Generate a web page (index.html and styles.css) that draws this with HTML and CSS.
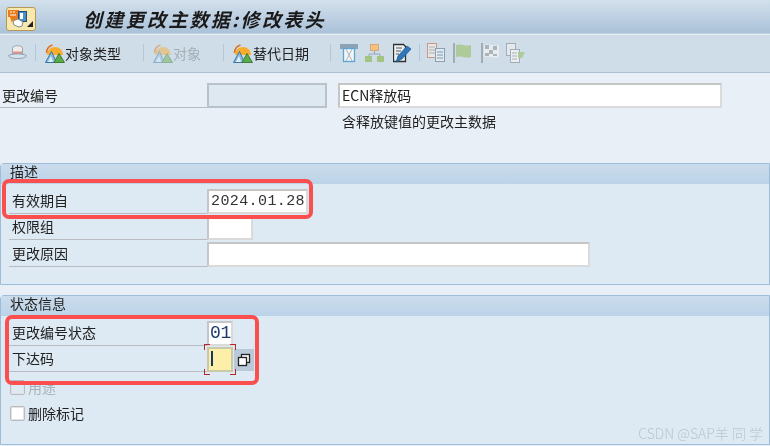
FILE: index.html
```html
<!DOCTYPE html>
<html lang="zh">
<head>
<meta charset="utf-8">
<title>创建更改主数据:修改表头</title>
<link rel="stylesheet" href="styles.css">
</head>
<body>
<header class="titlebar">
  <div class="menu-btn">
    <svg width="28" height="22" viewBox="0 0 28 22"><path d="M1 2h11v9H9l-1 3-2-2-1 3-2-6H1z" fill="#ea7a1c"/><path d="M3 4h2M6 4h2M3 7h6" stroke="#fff"/><rect x="11.500" y="3.500" width="8" height="10" fill="#4b8fc4" stroke="#1d4f7d"/><rect x="13" y="5" width="3" height="6" fill="#fff"/><path d="M6 13l5-2 5 3-1 4-3 1-5-2z" fill="#fff" stroke="#8a8a80"/><path d="M20 19h6v-6z" fill="#222"/></svg>
  </div>
  <h1 class="title">创建更改主数据:修改表头</h1>
</header>
<nav class="toolbar">
  <svg class="ico hat" width="19" height="18" viewBox="0 0 19 18"><path d="M4.500 4c0-3 10-3 10 0v7h-10z" fill="#f2ece8" stroke="#98a8b8"/><path d="M5 7.500h9v2.500H5z" fill="#e2928a"/><path d="M.5 11.500c3-2 15-2 18 0 0 4-18 4-18 0z" fill="#d6e4f0" stroke="#8aa3b8"/></svg>
  <span class="sep s1"></span>
  <span class="tb-btn b1"><svg class="mount" width="20" height="20" viewBox="0 0 20 20"><use href="#m"/></svg>对象类型</span>
  <span class="sep s2"></span>
  <span class="tb-btn b2 off"><svg class="mount" width="20" height="20" viewBox="0 0 20 20"><use href="#m"/></svg>对象</span>
  <span class="sep s3"></span>
  <span class="tb-btn b3"><svg class="mount" width="20" height="20" viewBox="0 0 20 20"><use href="#m"/></svg>替代日期</span>
  <span class="sep s4"></span>
  <svg class="ico i-t" width="19" height="20" viewBox="0 0 19 20"><rect x="0" y="1" width="18" height="5" fill="#8ca3b5"/><rect x="3.500" y="5.500" width="11" height="13" fill="#f2f6f9" stroke="#5aa6d2" stroke-width="1.300"/><path d="M6 6l3 6-3 6M12 6l-3 6 3 6" fill="none" stroke="#b0b4b8"/></svg>
  <svg class="ico i-n" width="19" height="20" viewBox="0 0 19 20"><rect x="5.500" y="1.500" width="8" height="6" fill="#f4c27e" stroke="#d9a77a"/><path d="M9.500 8v3M4 13v-2h11v2" fill="none" stroke="#97a6b2"/><rect x="0" y="13" width="7" height="6" fill="#a3c583"/><rect x="12" y="13" width="7" height="6" fill="#a3c583"/></svg>
  <svg class="ico i-n2" width="19" height="20" viewBox="0 0 19 20"><path d="M.5 1.500h10l2 2v15H.5z" fill="#eef1f4" stroke="#2e2e2e" stroke-width="1.300"/><path d="M3 5h6M3 8h5M3 11h3" stroke="#555"/><path d="M3 19l2-6 9-10 4 3-9 10z" fill="#2f77b8" stroke="#1a568c" stroke-width=".7"/></svg>
  <span class="sep s5"></span>
  <svg class="ico dim i-n3" width="19" height="20" viewBox="0 0 19 20"><rect x=".5" y=".5" width="9" height="14" fill="#ece8e4" stroke="#cc8a80"/><path d="M2 4h6M2 7h6M2 10h6" stroke="#a8a8a8"/><rect x="8.500" y="5.500" width="9" height="13" fill="#e6edf2" stroke="#7f96a8"/><path d="M10 9h6M10 12h6M10 15h6" stroke="#6e8ca5"/></svg>
  <svg class="ico dim i-n3" width="19" height="20" viewBox="0 0 19 20"><rect x="0" y="0" width="2" height="20" fill="#9aa4ac"/><path d="M3 2c5-2 9 2 15 0v12c-6 2-10-2-15 0z" fill="#a8c98a"/></svg>
  <svg class="ico dim i-n4" width="19" height="20" viewBox="0 0 19 20"><rect x="0" y="0" width="2" height="20" fill="#9aa4ac"/><path d="M3 2c5-2 9 2 15 0v12c-6 2-10-2-15 0z" fill="#eef0f2"/><path d="M4 2h4v4H4zM12 3h4v4h-4zM8 7h4v4H8zM4 10h4v3H4zM12 11h4v2h-4z" fill="#a4adb4"/></svg>
  <svg class="ico dim i-n5" width="19" height="20" viewBox="0 0 19 20"><rect x=".5" y=".5" width="9" height="12" fill="#e8ecef" stroke="#9aa4ac"/><rect x="4.500" y="6.500" width="9" height="13" fill="#f0f2f4" stroke="#9aa4ac"/><path d="M6 10h5M6 13h5M6 16h5" stroke="#aaa"/><path d="M12 9h7l-3 6h-4z" fill="#a8c98a"/></svg>
</nav>
<svg class="defs" width="0" height="0"><defs><g id="m"><path d="M2 12a8 8 0 0 1 16 0z" fill="#f7ac2c"/><path d="M1.500 10a8.500 8.500 0 0 1 6-8" fill="none" stroke="#e0701a" stroke-width="1.500"/><path d="M.5 19.500l6-11 5 11z" fill="#86bce2" stroke="#3d74a8"/><path d="M3 19l3-6 2 6z" fill="#e4f0f8"/><path d="M9 19.500l5-9 5.500 9z" fill="#5cab4a" stroke="#3c7d34"/></g></defs></svg>
<main class="content">
  <div class="row top-row">
    <span class="label">更改编号</span>
    <span class="input ro num"></span>
    <span class="input desc">ECN释放码</span>
  </div>
  <p class="note">含释放键值的更改主数据</p>
  <section class="group g1">
    <h2 class="group-head">描述</h2>
    <div class="group-body">
      <div class="row"><span class="label">有效期自</span><span class="input date">2024.01.28</span></div>
      <div class="row"><span class="label">权限组</span><span class="input auth"></span></div>
      <div class="row"><span class="label">更改原因</span><span class="input reason"></span></div>
    </div>
  </section>
  <section class="group g2">
    <h2 class="group-head">状态信息</h2>
    <div class="group-body">
      <div class="row"><span class="label">更改编号状态</span><span class="input mono">01</span></div>
      <div class="row"><span class="label">下达码</span><span class="input focus"><i class="caret"></i><i class="corners"></i></span>
        <span class="f4"><svg width="14" height="14" viewBox="0 0 14 14"><rect x="4.500" y="1.500" width="8" height="8" fill="#fff" stroke="#222" stroke-width="1.300"/><rect x="1.500" y="4.500" width="8" height="8" fill="#fff" stroke="#222" stroke-width="1.300"/></svg></span></div>
      <label class="check off"><i class="box"></i>用途</label>
      <label class="check"><i class="box"></i>删除标记</label>
    </div>
  </section>
</main>
<div class="mark m1"></div>
<div class="mark m2"></div>
<div class="watermark">CSDN @SAP羊 同 学</div>
</body>
</html>
```
FILE: styles.css
```css
* { box-sizing: border-box; }
html, body { margin: 0; height: 446px; overflow: hidden; }
body { position: relative; background: #e8eff6; color: #222; font: 14px/18px "Noto Sans CJK SC", "Liberation Sans", sans-serif; filter: blur(.3px); }
.titlebar { height: 34px; display: flex; align-items: center; padding: 4px 0 0 6px; background: linear-gradient(#d3e0ec, #aac2d9); border-bottom: 1px solid #c3d3e1; }
.menu-btn { width: 30px; height: 24px; border: 1px solid #b59a55; border-radius: 3px; background: #f8e7ae; display: flex; }
.title { margin: 0 0 0 47px; font: italic 700 19px/24px "Noto Sans CJK SC", sans-serif; letter-spacing: 2.300px; color: #1a1a1a; }
.toolbar { height: 39px; display: flex; align-items: center; padding: 0 0 2px 8px; background: #cfdde9; border-top: 1px solid #e4ecf3; border-bottom: 1px solid #adc0d0; }
.sep { width: 1px; height: 17px; background: #b2c7d9; flex: none; }
.ico { display: block; flex: none; }
.dim { opacity: .85; }
.tb-btn { display: flex; align-items: center; color: #222; font-size: 14px; flex: none; }
.tb-btn.off { color: #a4aeb6; }
.off .mount { opacity: .45; }
.s1 { margin-left: 8px; }
.b1, .b2, .b3 { margin-left: 9px; }
.s2, .s3 { margin-left: 22px; }
.s4 { margin-left: 21px; }
.i-t { margin-left: 9px; }
.i-n { margin-left: 6px; }
.i-n2 { margin-left: 9px; }
.s5 { margin-left: 7px; }
.i-n3 { margin-left: 7px; }
.i-n4 { margin-left: 9px; }
.i-n5 { margin-left: 6px; }
.defs { position: absolute; }
.content { padding-top: 10px; }
.row { display: flex; align-items: flex-end; height: 26.500px; position: relative; }
.label { width: 198px; height: 25px; line-height: 23px; padding-left: 3px; border-bottom: 1px solid #b8bcc0; flex: none; }
.top-row { height: 25px; }
.top-row .label { width: 207px; padding-left: 2px; line-height: 24px; }
.input { display: block; height: 25px; background: #fff; border: 2px solid #c6c6c6; border-right-color: #dadada; border-bottom-color: #dadada; line-height: 21px; padding-left: 2px; flex: none; }
.ro { background: #dde8f1; border-color: #b8c2cb; }
.num { width: 120px; }
.desc { width: 384px; margin-left: 11px; }
.note { margin: 4px 0 0 342px; height: 18px; }
.group { border: 1px solid #9dbcd9; border-top-left-radius: 4px; background: #dde9f3; }
.g1 { margin-top: 33px; height: 122px; }
.g2 { margin-top: 10px; height: 150px; }
.group-head { margin: 0; height: 20px; padding-left: 9px; font: 14px/15px "Noto Sans CJK SC", sans-serif; background: linear-gradient(#cbdcec, #bcd3e8); }
.group-body { padding: 3px 0 0 8px; }
.date { width: 101px; font: 15px/21px "Liberation Mono", monospace; letter-spacing: .4px; color: #333; }
.auth { width: 46px; }
.reason { width: 383px; }
.mono { width: 26px; font: 18px/21px "Liberation Mono", monospace; letter-spacing: -.4px; color: #1d3a6a; padding-left: 1px; }
.focus { width: 26px; background: #fdeea8; border-color: #c9c9a8; position: relative; }
.caret { position: absolute; left: 2px; top: 2px; width: 2px; height: 15px; background: #14346e; }
.corners { position: absolute; inset: -5px; background:
  linear-gradient(#b3262a,#b3262a) 0 0/6px 1px,
  linear-gradient(#b3262a,#b3262a) 0 0/1px 6px,
  linear-gradient(#b3262a,#b3262a) 100% 0/6px 1px,
  linear-gradient(#b3262a,#b3262a) 100% 0/1px 6px,
  linear-gradient(#b3262a,#b3262a) 0 100%/6px 1px,
  linear-gradient(#b3262a,#b3262a) 0 100%/1px 6px,
  linear-gradient(#b3262a,#b3262a) 100% 100%/6px 1px,
  linear-gradient(#b3262a,#b3262a) 100% 100%/1px 6px;
  background-repeat: no-repeat; }
.f4 { width: 20px; height: 22px; margin: 0 0 1px 1px; background: #b9c9d9; display: flex; align-items: center; justify-content: center; }
.check { display: flex; align-items: center; gap: 3px; height: 26px; padding-left: 1px; }
.check.off { color: #a9b2ba; margin-top: 2px; }
.box { width: 15px; height: 15px; background: #fff; border: 1px solid #b7bcc1; border-radius: 2px; box-shadow: inset 0 0 0 1px #e2e2e2; }
.check.off .box { background: #dde9f3; }
.mark { position: absolute; border: 4px solid #fb4f4f; border-radius: 7px; }
.m1 { left: 2px; top: 179px; width: 311px; height: 40px; }
.m2 { left: 5px; top: 315px; width: 254px; height: 70px; }
.watermark { position: absolute; right: 7px; top: 424px; font: 14px/18px "Noto Sans CJK SC", sans-serif; font-weight: 300; color: #bcc6cf; }
```
